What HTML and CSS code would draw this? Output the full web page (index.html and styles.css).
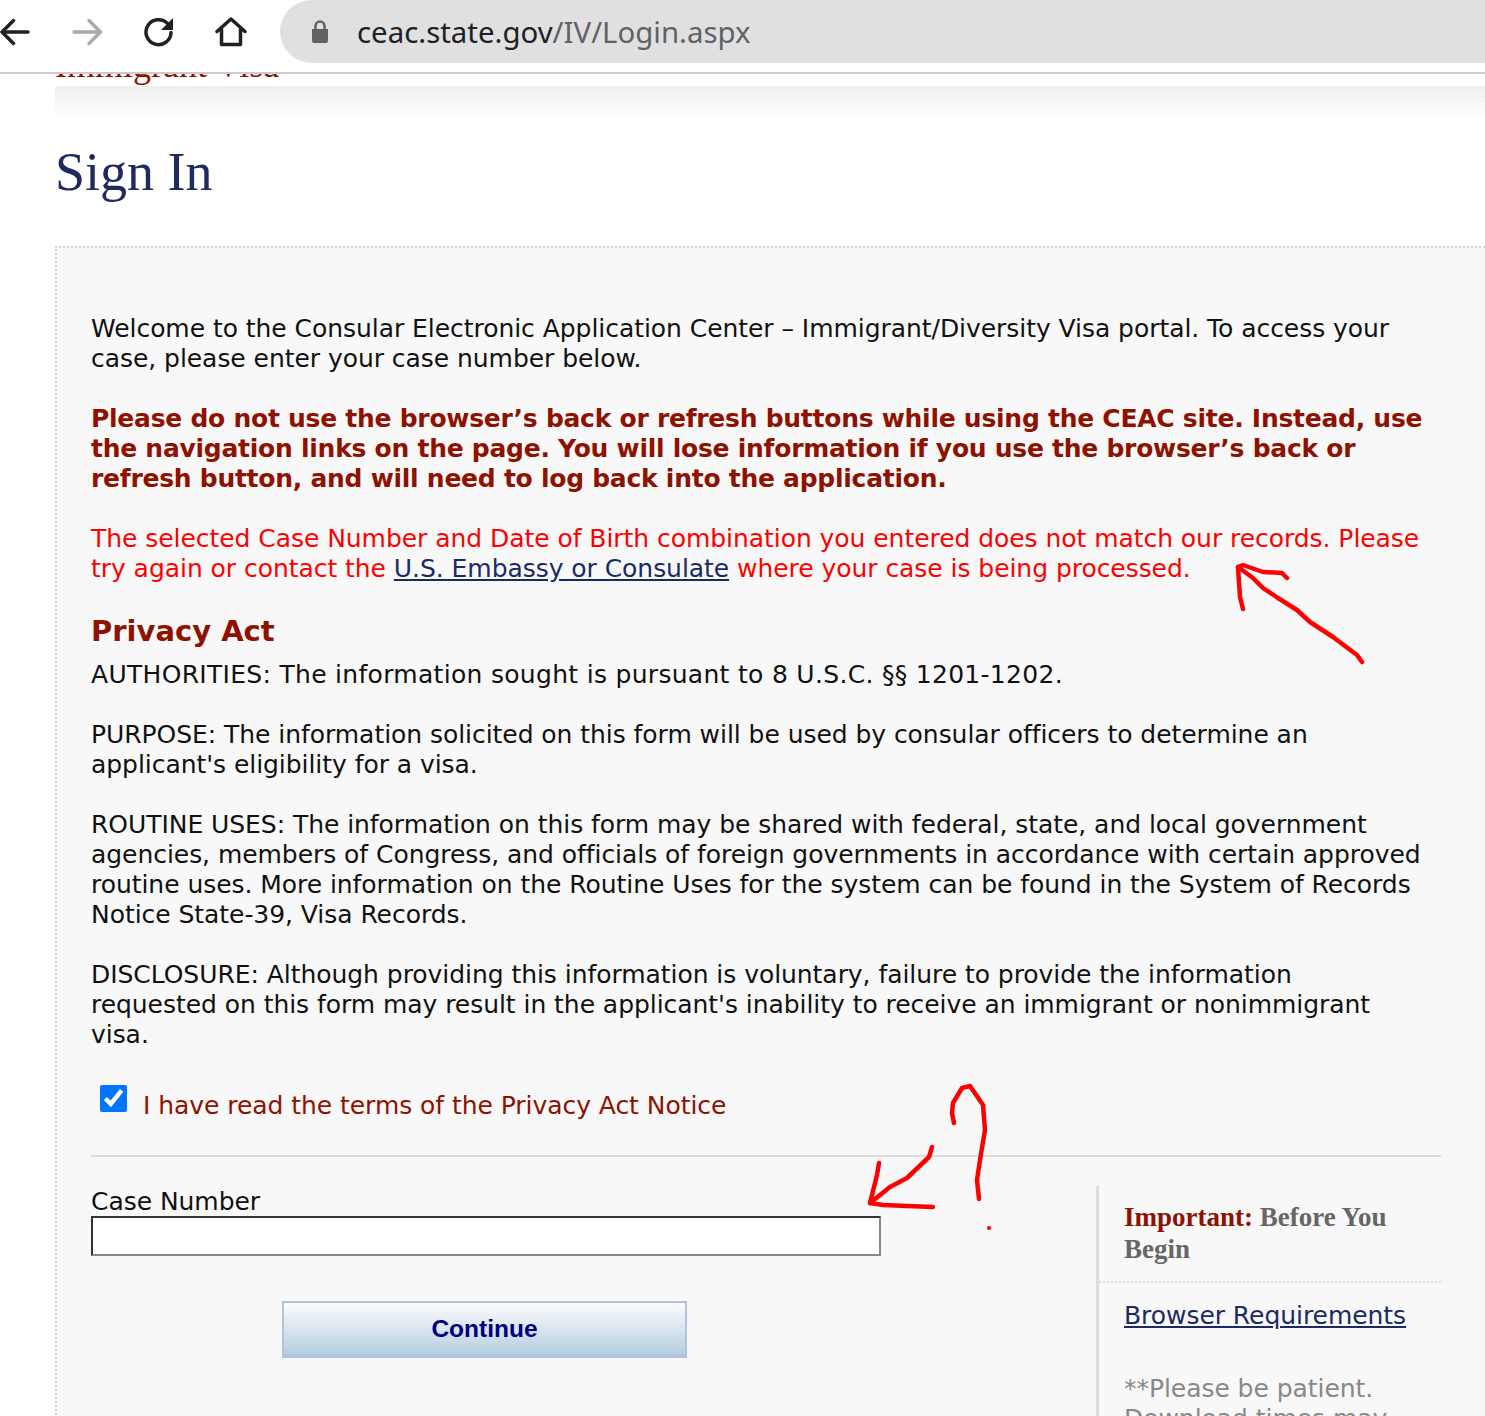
FILE: index.html
```html
<!DOCTYPE html>
<html lang="en">
<head>
  <meta charset="UTF-8" />
  <meta name="viewport" content="width=device-width, initial-scale=1" />
  <title>Sign In</title>
  <link rel="stylesheet" href="styles.css">
</head>
<body>
  <div class="toolbar">
    <div class="nav-icons">
      <svg class="icon" viewBox="0 0 32 32"><path d="M28 16H2.500M13.500 4.500 2 16l11.500 11.500"/></svg>
      <svg class="icon icon-off" viewBox="0 0 32 32"><path d="M3 16h26M18 4.500 29.500 16 18 27.500"/></svg>
      <svg class="icon icon-reload" viewBox="0 0 32 32"><path d="M28 16.500A12.500 12.500 0 1 1 24.500 7.500"/><path class="fill" d="M30 2v12H18z"/></svg>
      <svg class="icon icon-home" viewBox="0 0 32 32"><path d="M2 15.500 16 3l14 12.500M6.500 13v15.500h19V13"/></svg>
    </div>
    <div class="address">
      <svg class="lock" viewBox="0 0 20 24"><path d="M2 9h16v12a2 2 0 0 1-2 2H4a2 2 0 0 1-2-2z"/><path class="shackle" d="M5.500 10V6a4.500 4.500 0 0 1 9 0v4"/></svg>
      <span class="url">ceac.state.gov<span class="url-path">/IV/Login.aspx</span></span>
    </div>
  </div>

  <div class="page">
    <div class="banner"><div class="banner-title">Immigrant Visa</div></div>
    <div class="band"></div>
    <h1>Sign In</h1>

    <div class="panel">
      <p>Welcome to the Consular Electronic Application Center – Immigrant/Diversity Visa portal. To access your<br>case, please enter your case number below.</p>
      <p class="warning">Please do not use the browser’s back or refresh buttons while using the CEAC site. Instead, use<br>the navigation links on the page. You will lose information if you use the browser’s back or<br>refresh button, and will need to log back into the application.</p>
      <p class="error">The selected Case Number and Date of Birth combination you entered does not match our records. Please<br>try again or contact the <a href="#">U.S. Embassy or Consulate</a> where your case is being processed.</p>

      <h2>Privacy Act</h2>
      <p class="authorities">AUTHORITIES: The information sought is pursuant to 8 U.S.C. §§ 1201-1202.</p>
      <p>PURPOSE: The information solicited on this form will be used by consular officers to determine an<br>applicant's eligibility for a visa.</p>
      <p>ROUTINE USES: The information on this form may be shared with federal, state, and local government<br>agencies, members of Congress, and officials of foreign governments in accordance with certain approved<br>routine uses. More information on the Routine Uses for the system can be found in the System of Records<br>Notice State-39, Visa Records.</p>
      <p>DISCLOSURE: Although providing this information is voluntary, failure to provide the information<br>requested on this form may result in the applicant's inability to receive an immigrant or nonimmigrant<br>visa.</p>

      <div class="agree">
        <input type="checkbox" id="agree" checked />
        <label for="agree">I have read the terms of the Privacy Act Notice</label>
      </div>

      <hr />

      <div class="columns">
        <div class="form-col">
          <label class="field-label" for="case">Case Number</label>
          <input type="text" id="case" class="field" />
          <button class="continue">Continue</button>
        </div>
        <div class="side">
          <div class="side-title"><span class="side-red">Important:</span> Before You Begin</div>
          <div class="side-body">
            <a href="#">Browser Requirements</a>
            <p class="patient">**Please be patient. Download times may vary.</p>
          </div>
        </div>
      </div>
    </div>
  </div>

  <!-- red pen marks drawn on top of the screenshot -->
  <svg class="marks" viewBox="0 0 1485 1416">
    <path d="M1362 662 1357 655 1333 637 1310 622 1297 610 1278 598 1263 588 1253 578 1238 567"/>
    <path d="M1243 609 1240 597 1238 567 1243 565 1263 572 1282 573 1287 578"/>
    <path d="M932 1147 929 1157 907 1178 890 1187 870 1203"/>
    <path d="M879 1163 877 1175 870 1203 883 1205 907 1206 933 1207"/>
    <path d="M954 1123 952 1113 953 1103 962 1088 970 1086 983 1105 985 1130 980 1160 977 1180 979 1199"/>
    <circle cx="989" cy="1228" r="2"/>
  </svg>
</body>
</html>
```

FILE: styles.css
```css
* {
  box-sizing: border-box;
}

html,
body {
  margin: 0;
  height: 1416px;
  overflow: hidden;
}

body {
  position: relative;
  background: #fff;
  font-family: "DejaVu Sans", sans-serif;
  font-size: 25px;
  line-height: 30px;
  letter-spacing: -0.05px;
  color: #111;
}

/* browser chrome */
.toolbar {
  height: 74px;
  display: flex;
  align-items: flex-start;
  border-bottom: 2px solid #ccc;
  overflow: hidden;
}

.nav-icons {
  width: 280px;
  padding-top: 16px;
  display: flex;
  gap: 39px;
}

.icon {
  width: 32px;
  height: 32px;
  flex: none;
  fill: none;
  stroke: #202124;
  stroke-width: 3.500;
  stroke-linecap: round;
  stroke-linejoin: round;
}

.icon .fill {
  fill: #202124;
  stroke: none;
}

.icon-off {
  stroke: #a8a8a8;
}

.icon-reload {
  margin-left: 1px;
}

.icon-home {
  margin-left: 1px;
}

.address {
  flex: 1;
  height: 63px;
  margin-right: -40px;
  padding-left: 30px;
  display: flex;
  align-items: center;
  background: #e0e0e0;
  border-radius: 32px;
}

.lock {
  width: 20px;
  height: 24px;
  margin-right: 27px;
  fill: #5f6368;
}

.lock .shackle {
  fill: none;
  stroke: #5f6368;
  stroke-width: 2.500;
}

.url {
  font-family: "Noto Sans", sans-serif;
  font-size: 29.400px;
  letter-spacing: 0;
  color: #202124;
}

.url-path {
  color: #5f6368;
}

/* page */
.page {
  height: 1342px;
  padding-left: 55px;
  overflow: hidden;
}

.banner {
  height: 12px;
  overflow: hidden;
}

.banner-title {
  margin-top: -29px;
  font-family: "Liberation Serif", serif;
  font-size: 36px;
  line-height: 40px;
  letter-spacing: 0;
  color: #8f1100;
}

.band {
  height: 34px;
  background:
    repeating-conic-gradient(#fff0 0 25%, #ffffff66 0 50%) 0 0 / 4px 4px,
    linear-gradient(#ebebeb, #fff);
}

h1 {
  margin: 22px 0 44px;
  font-family: "Liberation Serif", serif;
  font-size: 54px;
  line-height: 60px;
  letter-spacing: 0;
  font-weight: normal;
  color: #1f2a60;
}

.panel {
  padding: 66px 44px 0 34px;
  background: #f8f8f8;
  border-top: 2px dotted #d8d8c4;
  border-left: 2px dotted #d8d8c4;
}

.panel p {
  margin: 0 0 30px;
}

.panel .warning {
  font-weight: bold;
  letter-spacing: -0.26px;
  color: #8f1100;
}

.panel .error {
  margin-bottom: 24px;
  color: #f00;
}

.panel .authorities {
  letter-spacing: 0.3px;
}

a {
  color: #1b2a66;
}

h2 {
  margin: 0 0 6px;
  font-size: 29px;
  line-height: 46px;
  letter-spacing: 0;
  color: #8f1100;
}

.agree {
  margin: 35px 0 34px 9px;
  display: flex;
  align-items: flex-start;
  gap: 16px;
  color: #8f1100;
}

.agree input {
  width: 27px;
  height: 27px;
  margin: 0;
  flex: none;
}

.agree label {
  margin-top: 6px;
}

hr {
  height: 2px;
  margin: 0 0 29px;
  border: 0;
  background: #ddd;
}

.columns {
  display: flex;
}

.form-col {
  width: 790px;
  margin-right: 215px;
  padding-top: 2px;
}

.field-label {
  display: block;
  line-height: 28px;
}

.field {
  display: block;
  width: 790px;
  height: 40px;
  border: 2px solid;
  border-color: #333 #888 #888 #333;
  background: #fff;
}

.continue {
  display: block;
  width: 405px;
  height: 57px;
  margin: 45px 0 0 191px;
  font-family: "Liberation Sans", sans-serif;
  font-size: 24.500px;
  font-weight: bold;
  color: #000080;
  border: 2px solid #adc4da;
  border-bottom-width: 4px;
  background: linear-gradient(#fbfcfe, #b8cee0);
}

.side {
  flex: 1;
  border-left: 3px solid #ddd;
}

.side-title {
  padding: 15px 0 16px 25px;
  font-family: "Liberation Serif", serif;
  font-size: 27px;
  line-height: 32px;
  letter-spacing: 0;
  font-weight: bold;
  color: #666;
  border-bottom: 2px dotted #ddd;
}

.side-red {
  color: #8f1100;
}

.side-body {
  padding: 18px 0 0 25px;
}

.panel .patient {
  margin-top: 43px;
  color: #888;
}

/* pen marks */
.marks {
  position: absolute;
  top: 0;
  left: 0;
  width: 1485px;
  height: 1416px;
  fill: none;
  stroke: #f00;
  stroke-width: 4.500;
  stroke-linecap: round;
  stroke-linejoin: round;
}

.marks circle {
  fill: #f00;
  stroke: none;
}
```
